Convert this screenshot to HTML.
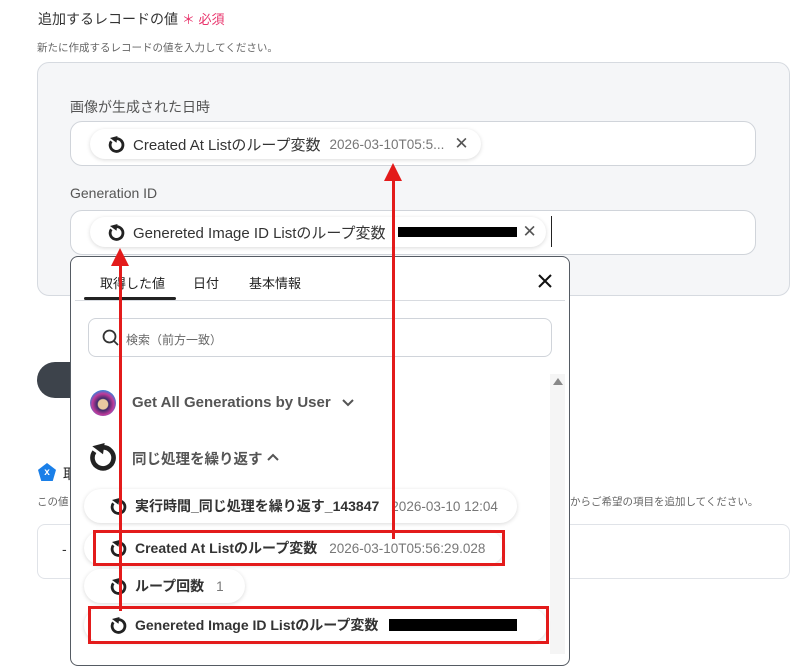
<!DOCTYPE html>
<html><head><meta charset="utf-8">
<style>
*{box-sizing:border-box;margin:0;padding:0}
body{width:796px;height:653px;overflow:hidden;background:#fff;font-family:"Liberation Sans","Noto Sans CJK JP",sans-serif;position:relative;color:#333}
.a{position:absolute}
.chip{position:absolute;background:#fff;border-radius:18px;box-shadow:0 1px 4px rgba(0,0,0,.15);display:flex;align-items:center;font-size:14px;white-space:nowrap}
.ic{width:17px;height:17px;margin-right:8px;flex:none}
.gray{color:#777;font-weight:normal;font-size:13.5px}
.red{position:absolute;border:3px solid #e31b1b}
</style></head><body>
<svg width="0" height="0" style="position:absolute"><defs>
<g id="loop"><path d="M8.5 2.6 A6.4 6.4 0 1 1 3.3 5.3" fill="none" stroke="#222" stroke-width="2.8"/><path d="M2 2 L9.5 0 L8.5 6.8 Z" fill="#222"/></g>
</defs></svg>

<div class="a" style="left:38px;top:9px;font-size:14px;color:#333">追加するレコードの値 <span style="color:#e8336b;font-size:13px">＊ 必須</span></div>
<div class="a" style="left:37px;top:40px;font-size:10.5px;color:#666">新たに作成するレコードの値を入力してください。</div>

<div class="a" style="left:37px;top:62px;width:753px;height:234px;background:#f5f6f8;border:1px solid #d6dae0;border-radius:12px"></div>
<div class="a" style="left:70px;top:97px;font-size:14px;color:#555">画像が生成された日時</div>
<div class="a" style="left:70px;top:121px;width:686px;height:45px;background:#fff;border:1px solid #d0d4da;border-radius:12px"></div>
<div class="chip" style="left:90px;top:129px;width:391px;height:30px;padding-left:18px;font-size:15px"><svg class="ic" viewBox="0 0 17 17"><use href="#loop"/></svg><span style="color:#333">Created At Listのループ変数</span><span class="gray" style="margin-left:9px">2026-03-10T05:5...</span><span style="margin-left:10px;color:#555;font-size:17px">✕</span></div>
<div class="a" style="left:70px;top:185px;font-size:14px;color:#555">Generation ID</div>
<div class="a" style="left:70px;top:210px;width:686px;height:45px;background:#fff;border:1px solid #d0d4da;border-radius:12px"></div>
<div class="chip" style="left:90px;top:217px;width:456px;height:30px;padding-left:18px;font-size:15px"><svg class="ic" viewBox="0 0 17 17"><use href="#loop"/></svg><span>Genereted Image ID Listのループ変数</span><span style="display:inline-block;width:119px;height:10px;background:#000;margin-left:12px;flex:none"></span><span style="margin-left:6px;color:#555;font-size:17px">✕</span></div>
<div class="a" style="left:551px;top:216px;width:1px;height:31px;background:#222"></div>

<div class="a" style="left:37px;top:362px;width:60px;height:36px;background:#3d434b;border-radius:18px"></div>
<div class="a" style="left:38px;top:463px;width:18px;height:18px;background:#1a7fe8;clip-path:polygon(50% 0,100% 38%,82% 100%,18% 100%,0 38%);color:#fff;font-size:10px;font-weight:bold;text-align:center;line-height:20px">x</div>
<div class="a" style="left:63px;top:464px;font-size:14px;color:#222">取</div>
<div class="a" style="left:37px;top:494px;font-size:10.5px;color:#666">この値</div>
<div class="a" style="left:570px;top:494px;font-size:10.5px;color:#666">からご希望の項目を追加してください。</div>
<div class="a" style="left:37px;top:524px;width:753px;height:55px;border:1px solid #e0e3e8;border-radius:8px"></div>
<div class="a" style="left:62px;top:541px;font-size:14px;color:#333">-</div>

<div class="a" style="left:70px;top:256px;width:500px;height:410px;background:#fff;border:1px solid #555b63;border-radius:8px"></div>
<div class="a" style="left:100px;top:273px;font-size:13px;color:#222">取得した値</div>
<div class="a" style="left:193px;top:273px;font-size:13px;color:#222">日付</div>
<div class="a" style="left:249px;top:273px;font-size:13px;color:#222">基本情報</div>
<div class="a" style="left:75px;top:300px;width:490px;height:1px;background:#d8dbe0"></div>
<div class="a" style="left:84px;top:297px;width:92px;height:3px;background:#222;border-radius:2px"></div>
<svg class="a" style="left:537px;top:273px" width="16" height="16" viewBox="0 0 16 16"><path d="M2 2L14 14M14 2L2 14" stroke="#111" stroke-width="2"/></svg>
<div class="a" style="left:88px;top:318px;width:464px;height:39px;border:1px solid #d0d4da;border-radius:8px"></div>
<svg class="a" style="left:102px;top:329px" width="18" height="18" viewBox="0 0 18 18"><circle cx="7.5" cy="7.5" r="6" fill="none" stroke="#333" stroke-width="1.8"/><path d="M12 12L16 16" stroke="#333" stroke-width="1.8"/></svg>
<div class="a" style="left:126px;top:331px;font-size:12px;color:#666">検索（前方一致）</div>
<div class="a" style="left:550px;top:374px;width:15px;height:280px;background:#f5f5f5"></div>
<div class="a" style="left:553px;top:378px;width:0;height:0;border-left:5px solid transparent;border-right:5px solid transparent;border-bottom:7px solid #888"></div>

<div class="a" style="left:90px;top:390px;width:26px;height:26px;border-radius:50%;background:radial-gradient(circle at 50% 55%,#e8c9a0 0 25%,#3a2a6a 30%,#c03a9a 55%,#2a8adf 75%,#ddd 100%)"></div>
<div class="a" style="left:132px;top:394px;font-size:15px;font-weight:bold;color:#555">Get All Generations by User</div>
<svg class="a" style="left:342px;top:399px" width="12" height="8" viewBox="0 0 12 8"><path d="M1 1L6 6L11 1" fill="none" stroke="#555" stroke-width="2"/></svg>
<svg class="a" style="left:89px;top:443px" width="28" height="28" viewBox="0 0 17 17"><use href="#loop"/></svg>
<div class="a" style="left:132px;top:448px;font-size:14.5px;font-weight:bold;color:#555">同じ処理を繰り返す</div>
<svg class="a" style="left:267px;top:453px" width="12" height="8" viewBox="0 0 12 8"><path d="M1 7L6 2L11 7" fill="none" stroke="#555" stroke-width="2"/></svg>

<div class="chip" style="left:84px;top:489px;width:433px;height:34px;padding-left:26px;font-weight:bold"><svg class="ic" viewBox="0 0 17 17"><use href="#loop"/></svg>実行時間_同じ処理を繰り返す_143847<span class="gray" style="margin-left:12px">2026-03-10 12:04</span></div>
<div class="chip" style="left:84px;top:531px;width:420px;height:34px;padding-left:26px;font-weight:bold"><svg class="ic" viewBox="0 0 17 17"><use href="#loop"/></svg>Created At Listのループ変数<span class="gray" style="margin-left:12px">2026-03-10T05:56:29.028</span></div>
<div class="chip" style="left:84px;top:569px;width:161px;height:34px;padding-left:26px;font-weight:bold"><svg class="ic" viewBox="0 0 17 17"><use href="#loop"/></svg>ループ回数<span class="gray" style="margin-left:12px">1</span></div>
<div class="chip" style="left:84px;top:608px;width:463px;height:34px;padding-left:26px;font-weight:bold"><svg class="ic" viewBox="0 0 17 17"><use href="#loop"/></svg>Genereted Image ID Listのループ変数<span style="display:inline-block;width:128px;height:12px;background:#000;margin-left:11px;flex:none"></span></div>

<div class="red" style="left:93px;top:530px;width:412px;height:36px"></div>
<div class="red" style="left:88px;top:606px;width:461px;height:38px"></div>

<div class="a" style="left:119px;top:264px;width:3px;height:347px;background:#e31b1b"></div>
<div class="a" style="left:111px;top:248px;width:0;height:0;border-left:9px solid transparent;border-right:9px solid transparent;border-bottom:18px solid #e31b1b"></div>
<div class="a" style="left:392px;top:179px;width:3px;height:360px;background:#e31b1b"></div>
<div class="a" style="left:384px;top:163px;width:0;height:0;border-left:9px solid transparent;border-right:9px solid transparent;border-bottom:18px solid #e31b1b"></div>
</body></html>
